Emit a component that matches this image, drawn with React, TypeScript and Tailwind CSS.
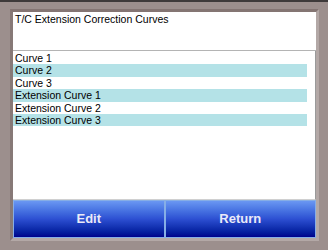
import React from "react";

const rows = [
  { label: "Curve 1", hi: false },
  { label: "Curve 2", hi: true },
  { label: "Curve 3", hi: false },
  { label: "Extension Curve 1", hi: true },
  { label: "Extension Curve 2", hi: false },
  { label: "Extension Curve 3", hi: true },
];

export default function App() {
  return (
    <div
      className="w-[328px] h-[250px] bg-[#9c8f8d] border-t-2 border-[#3e3a3a] pt-[7px] pl-[10px] pr-[9px] pb-[9px]"
      style={{ fontFamily: '"Liberation Sans", Arial, sans-serif' }}
    >
      <div className="w-full h-full border-[3px] border-t-[#847573] border-l-[#877977] border-b-[#b3a8a6] border-r-[#b3a8a6] flex flex-col">
        <div className="h-[39px] bg-white border-b border-[#b4b4b4] px-[2px] pt-[1px] text-[10.5px] leading-[12px] text-black">
          T/C Extension Correction Curves
        </div>
        <div className="flex-1 bg-white border-r border-[#9a9a9a] pt-[1px] pr-[8px] border-b border-b-[#d0d0d0]">
          {rows.map((r) => (
            <div
              key={r.label}
              className={`h-[12.4px] px-[2px] text-[10.5px] leading-[12.4px] text-black ${
                r.hi ? "bg-[#b4e2e7]" : "bg-white"
              }`}
            >
              {r.label}
            </div>
          ))}
        </div>
        <div className="h-[38px] flex">
          <div className="flex-1 flex items-center justify-center bg-gradient-to-b from-[#6a97f2] via-[#2d4fd2] to-[#00008c] border border-[#86aee6] text-[13px] font-bold text-[#eaeaf8]">
            Edit
          </div>
          <div className="flex-1 flex items-center justify-center bg-gradient-to-b from-[#6a97f2] via-[#2d4fd2] to-[#00008c] border border-[#86aee6] text-[13px] font-bold text-[#eaeaf8]">
            Return
          </div>
        </div>
      </div>
    </div>
  );
}
